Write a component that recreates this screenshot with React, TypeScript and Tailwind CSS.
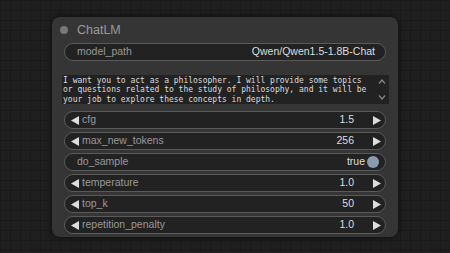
import React from 'react';

type Row = { label: string; value?: string; kind: 'number' | 'toggle' };

const rows: Row[] = [
  { label: 'cfg', value: '1.5', kind: 'number' },
  { label: 'max_new_tokens', value: '256', kind: 'number' },
  { label: 'do_sample', value: 'true', kind: 'toggle' },
  { label: 'temperature', value: '1.0', kind: 'number' },
  { label: 'top_k', value: '50', kind: 'number' },
  { label: 'repetition_penalty', value: '1.0', kind: 'number' },
];

const prompt = [
  'I want you to act as a philosopher. I will provide some topics',
  'or questions related to the study of philosophy, and it will be',
  'your job to explore these concepts in depth.',
];

function ArrowLeft() {
  return (
    <svg width="8" height="9" viewBox="0 0 8 9" className="shrink-0">
      <polygon points="8,0 8,9 0,4.5" fill="#dddddd" />
    </svg>
  );
}

function ArrowRight() {
  return (
    <svg width="8" height="9" viewBox="0 0 8 9" className="shrink-0">
      <polygon points="0,0 0,9 8,4.5" fill="#dddddd" />
    </svg>
  );
}

function Widget({ row }: { row: Row }) {
  if (row.kind === 'toggle') {
    return (
      <div className="flex h-[18px] items-center rounded-full border border-[#5a5a5a] bg-[#222] pl-[12px] pr-[6px]">
        <span className="text-[#999]">{row.label}</span>
        <span className="ml-auto text-[#ddd]">{row.value}</span>
        <span className="ml-[2px] h-[12px] w-[12px] rounded-full bg-[#8a9bb0]" />
      </div>
    );
  }
  return (
    <div className="flex h-[18px] items-center rounded-full border border-[#5a5a5a] bg-[#222] pl-[6px] pr-[4px]">
      <ArrowLeft />
      <span className="ml-[3px] text-[#999]">{row.label}</span>
      <span className="ml-auto text-[#ddd]">{row.value}</span>
      <span className="ml-[19px]">
        <ArrowRight />
      </span>
    </div>
  );
}

export default function App() {
  return (
    <div
      className="relative h-[253px] w-[450px] overflow-hidden bg-[#1f1f1f] bg-[linear-gradient(#1a1a1a_1px,transparent_1px),linear-gradient(90deg,#1a1a1a_1px,transparent_1px)] bg-[size:10px_10px]"
      style={{ fontFamily: '"Liberation Sans", Arial, sans-serif' }}
    >
      <div className="absolute left-[52px] top-[17px] flex w-[346px] flex-col rounded-[8px] bg-[#353535] pb-[3px] shadow-[0_0_6px_rgba(0,0,0,0.6)]">
        {/* Title */}
        <div className="flex h-[26px] items-center pl-[8px]">
          <span className="h-[8px] w-[8px] rounded-full bg-[#777]" />
          <span className="ml-[9px] text-[12.5px] text-[#999]">ChatLM</span>
        </div>

        <div className="px-[12px] text-[10.5px]">
          <div className="flex h-[18px] items-center rounded-full border border-[#5a5a5a] bg-[#222] pl-[12px] pr-[10px]">
            <span className="text-[#999]">model_path</span>
            <span className="ml-auto text-[#ddd]">Qwen/Qwen1.5-1.8B-Chat</span>
          </div>
        </div>

        {/* Prompt */}
        <div className="mx-[10px] mr-[9px] mt-[14px] flex h-[29px] bg-[#222]">
          <div
            className="flex-1 pl-[1px] pt-[1px] text-[8px] leading-[9.4px] text-[#ddd]"
            style={{ fontFamily: '"DejaVu Sans Mono", monospace' }}
          >
            {prompt.map((line) => (
              <div key={line} className="whitespace-pre">
                {line}
              </div>
            ))}
          </div>
          <div className="flex w-[14px] flex-col items-center justify-between py-[4px] text-[#888]">
            <svg width="8" height="5" viewBox="0 0 8 5">
              <polyline points="1,4.5 4,1 7,4.5" fill="none" stroke="#888" strokeWidth="1.2" />
            </svg>
            <svg width="8" height="5" viewBox="0 0 8 5">
              <polyline points="1,0.5 4,4 7,0.5" fill="none" stroke="#888" strokeWidth="1.2" />
            </svg>
          </div>
        </div>

        <div className="mt-[7px] flex flex-col gap-[3px] px-[12px] text-[10.5px]">
          {rows.map((row) => (
            <Widget key={row.label} row={row} />
          ))}
        </div>
      </div>
    </div>
  );
}
